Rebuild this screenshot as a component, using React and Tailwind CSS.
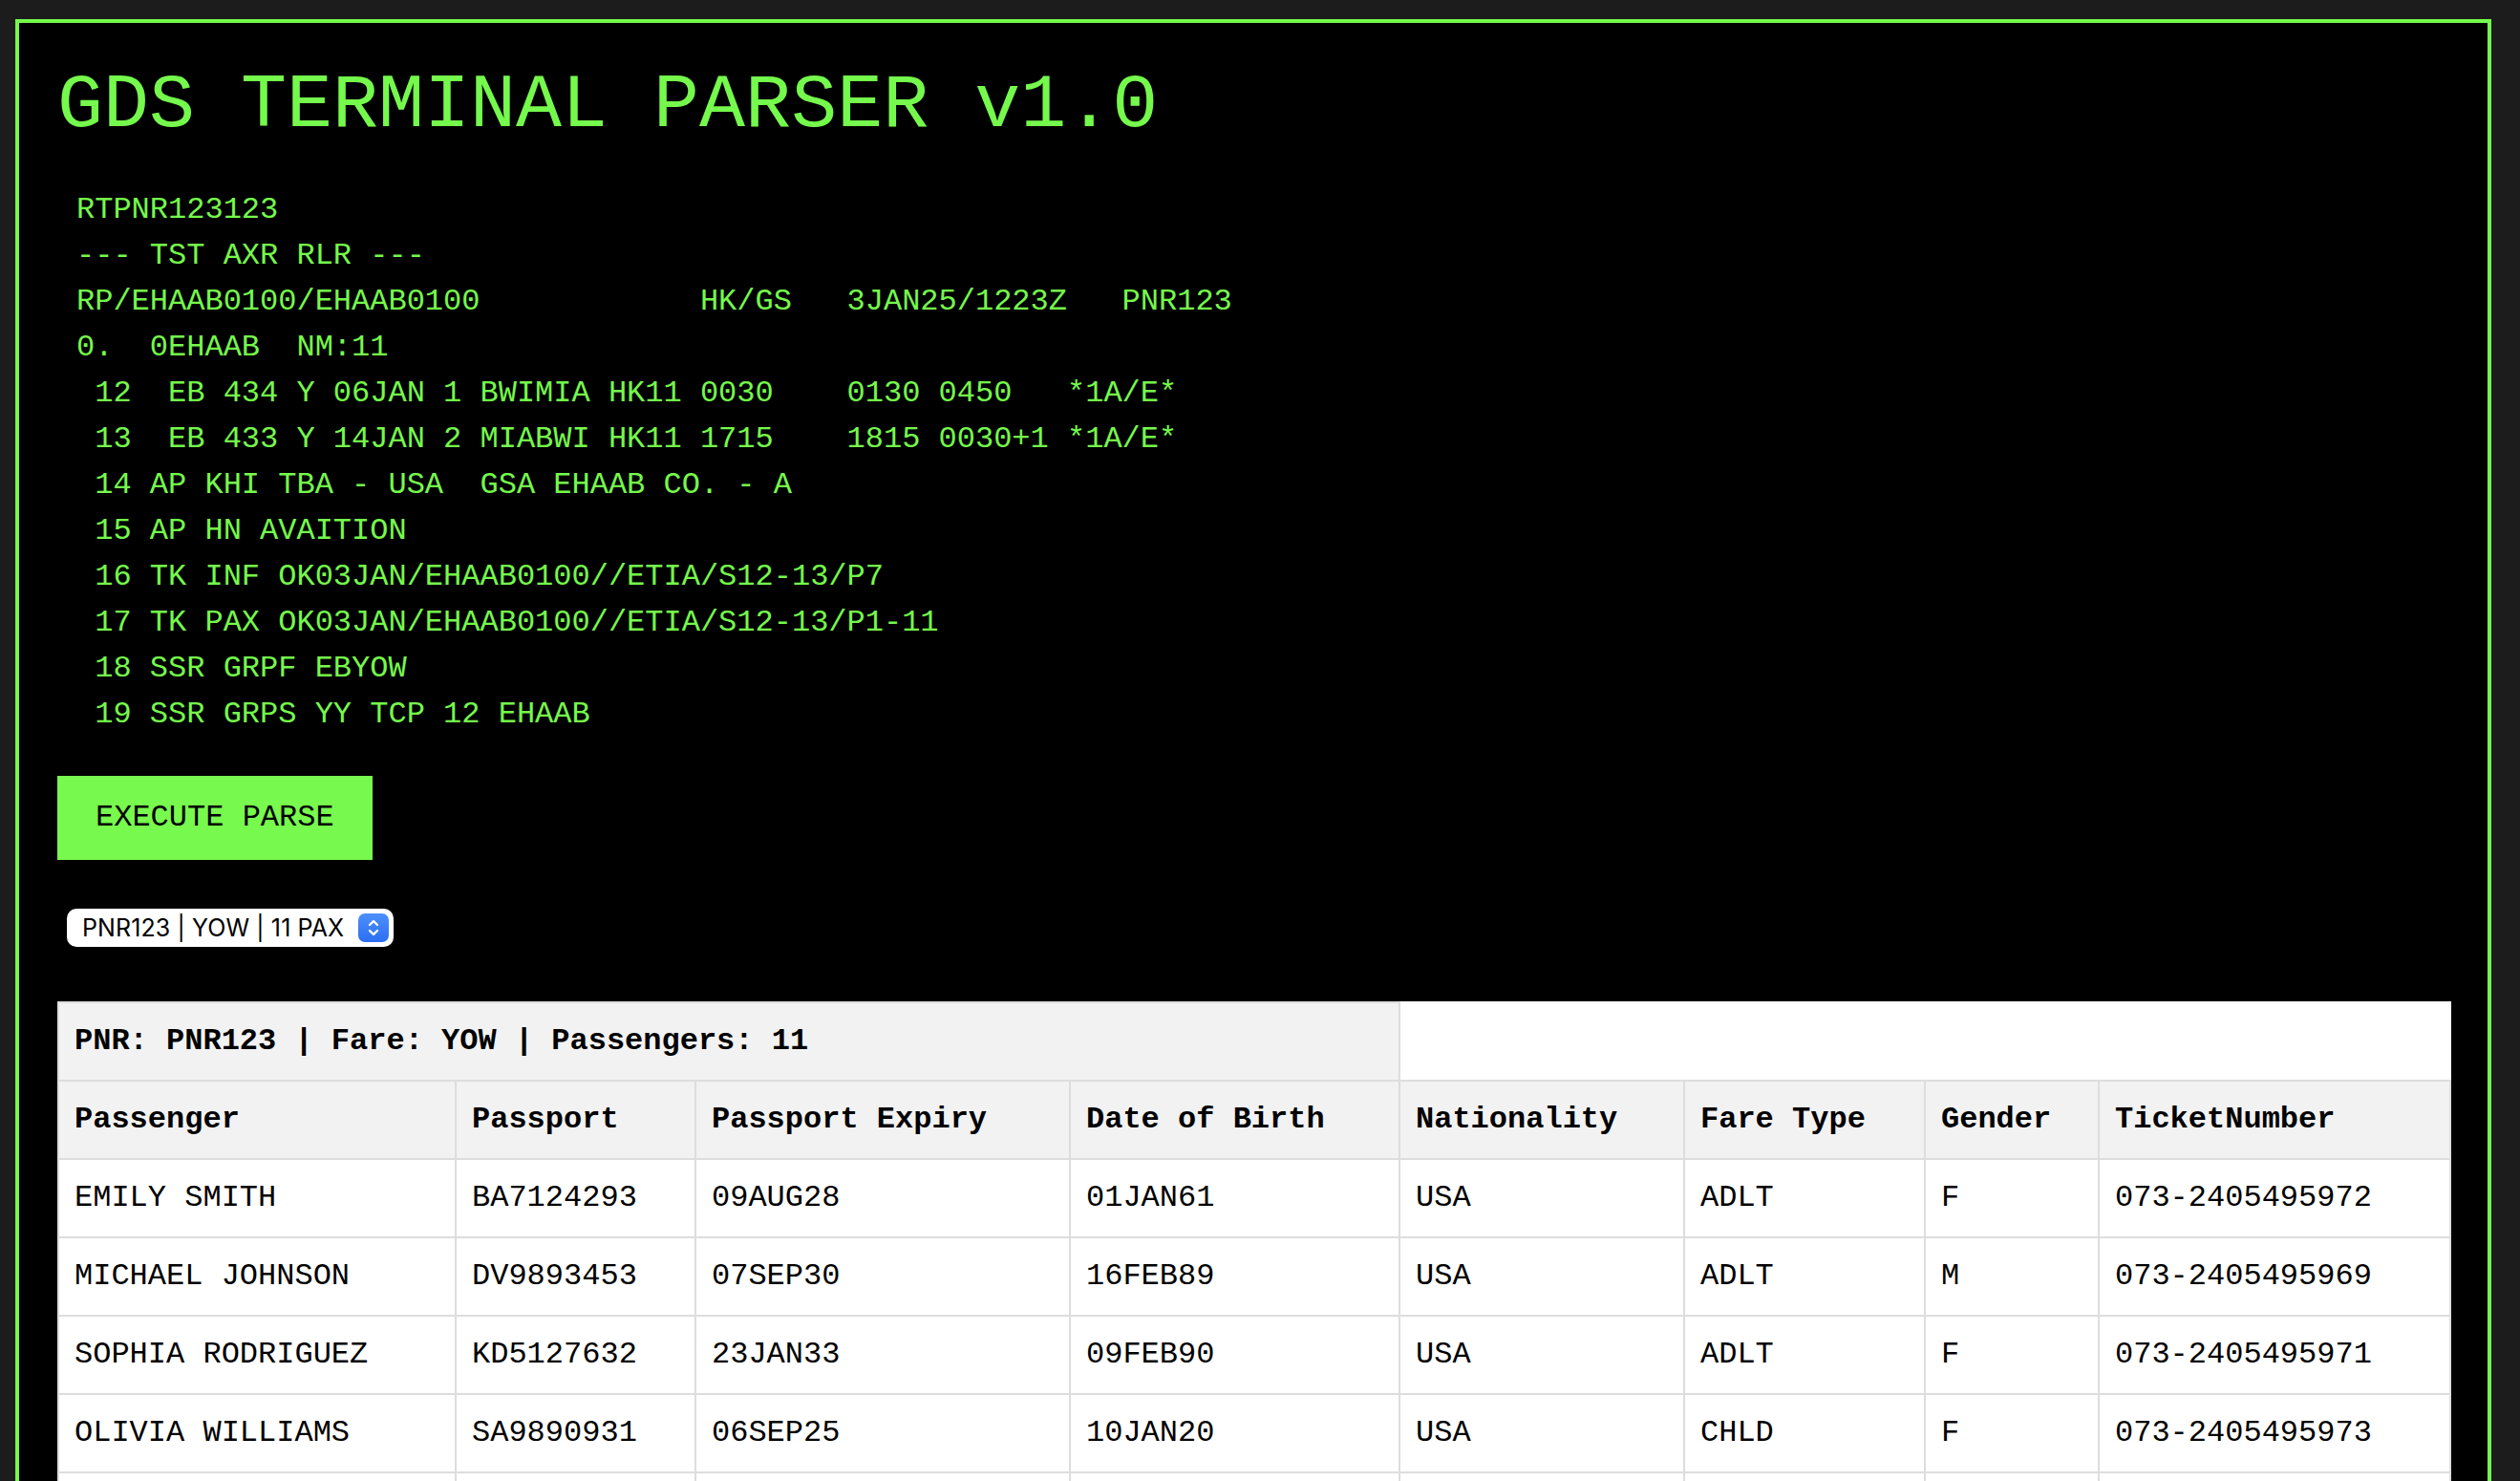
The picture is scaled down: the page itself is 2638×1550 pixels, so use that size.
const TERMINAL = [
  'RTPNR123123',
  '--- TST AXR RLR ---',
  'RP/EHAAB0100/EHAAB0100            HK/GS   3JAN25/1223Z   PNR123',
  '0.  0EHAAB  NM:11',
  ' 12  EB 434 Y 06JAN 1 BWIMIA HK11 0030    0130 0450   *1A/E*',
  ' 13  EB 433 Y 14JAN 2 MIABWI HK11 1715    1815 0030+1 *1A/E*',
  ' 14 AP KHI TBA - USA  GSA EHAAB CO. - A',
  ' 15 AP HN AVAITION',
  ' 16 TK INF OK03JAN/EHAAB0100//ETIA/S12-13/P7',
  ' 17 TK PAX OK03JAN/EHAAB0100//ETIA/S12-13/P1-11',
  ' 18 SSR GRPF EBYOW',
  ' 19 SSR GRPS YY TCP 12 EHAAB',
]

const COLUMNS = [
  { label: 'Passenger', width: 416 },
  { label: 'Passport', width: 251 },
  { label: 'Passport Expiry', width: 392 },
  { label: 'Date of Birth', width: 345 },
  { label: 'Nationality', width: 298 },
  { label: 'Fare Type', width: 252 },
  { label: 'Gender', width: 182 },
  { label: 'TicketNumber', width: 368 },
]

const PASSENGERS = [
  ['EMILY SMITH', 'BA7124293', '09AUG28', '01JAN61', 'USA', 'ADLT', 'F', '073-2405495972'],
  ['MICHAEL JOHNSON', 'DV9893453', '07SEP30', '16FEB89', 'USA', 'ADLT', 'M', '073-2405495969'],
  ['SOPHIA RODRIGUEZ', 'KD5127632', '23JAN33', '09FEB90', 'USA', 'ADLT', 'F', '073-2405495971'],
  ['OLIVIA WILLIAMS', 'SA9890931', '06SEP25', '10JAN20', 'USA', 'CHLD', 'F', '073-2405495973'],
  ['JAMES BROWN', 'PL4456120', '14MAR29', '22JUL75', 'USA', 'ADLT', 'M', '073-2405495970'],
  ['ISABELLA DAVIS', 'RT7710384', '30NOV31', '05MAY84', 'USA', 'ADLT', 'F', '073-2405495974'],
  ['LUCAS MILLER', 'GH2209871', '18JUN27', '11DEC24', 'USA', 'INF', 'M', '073-2405495975'],
  ['AVA WILSON', 'MN6638254', '02FEB32', '27AUG92', 'USA', 'ADLT', 'F', '073-2405495976'],
  ['ETHAN MOORE', 'TX3391046', '25OCT28', '19APR88', 'USA', 'ADLT', 'M', '073-2405495977'],
  ['MIA TAYLOR', 'WQ8824517', '09JUL30', '03SEP15', 'USA', 'CHLD', 'F', '073-2405495978'],
  ['NOAH ANDERSON', 'ZC5502768', '16JAN34', '28FEB79', 'USA', 'ADLT', 'M', '073-2405495979'],
]

const cell = 'border-2 border-[#dddddd] px-4 py-4 text-left align-middle'

export default function App() {
  return (
    <div className="h-screen overflow-y-auto bg-[#1c1c1c] pt-[20px] pl-[16px] font-['Liberation_Mono',monospace] leading-[48px]">
      <div className="w-[2592px] border-4 border-[#75f94c] bg-black p-10">
        {/* Title */}
        <h1 className="mt-[1px] text-[80px] leading-[91px] text-[#75f94c]">GDS TERMINAL PARSER v1.0</h1>

        {/* Terminal dump */}
        <div className="mt-[40px] pl-[20px] text-[32px] leading-[48px] text-[#75f94c] whitespace-pre">
          {TERMINAL.map((line, i) => <div key={i}>{line}</div>)}
        </div>

        <button className="mt-[40px] block bg-[#77f94d] px-10 py-5 text-[32px] leading-[48px] text-black">
          EXECUTE PARSE
        </button>

        {/* PNR picker */}
        <div className="mt-[51px] ml-[10px] flex h-[40px] w-[342px] items-center justify-between rounded-[10px] bg-white pl-[16px] pr-[5px] font-['Inter',sans-serif] text-[25px] leading-none text-black">
          <span className="tracking-[0.1px]">PNR123 | YOW | 11 PAX</span>
          <span className="flex h-[30px] w-[32px] flex-col items-center justify-center rounded-[7px] bg-gradient-to-b from-[#4d90fa] to-[#2c6ef2]">
            <svg width="14" height="22" viewBox="0 0 14 22" fill="none" stroke="white" strokeWidth="2.4" strokeLinecap="round" strokeLinejoin="round">
              <path d="M3 8 L7 4 L11 8" />
              <path d="M3 14 L7 18 L11 14" />
            </svg>
          </span>
        </div>

        {/* Passenger table */}
        <table className="mt-[57px] w-[2504px] table-fixed border-collapse bg-white text-[32px] leading-[48px] text-black">
          <colgroup>
            {COLUMNS.map(c => <col key={c.label} style={{ width: c.width }} />)}
          </colgroup>
          <thead>
            <tr>
              <th colSpan={4} className={`${cell} bg-[#f2f2f2] font-bold`}>
                PNR: PNR123 | Fare: YOW | Passengers: 11
              </th>
            </tr>
            <tr>
              {COLUMNS.map(c => (
                <th key={c.label} className={`${cell} bg-[#f2f2f2] font-bold`}>{c.label}</th>
              ))}
            </tr>
          </thead>
          <tbody>
            {PASSENGERS.map(row => (
              <tr key={row[7]}>
                {row.map((v, i) => <td key={i} className={cell}>{v}</td>)}
              </tr>
            ))}
          </tbody>
        </table>
      </div>
    </div>
  )
}
